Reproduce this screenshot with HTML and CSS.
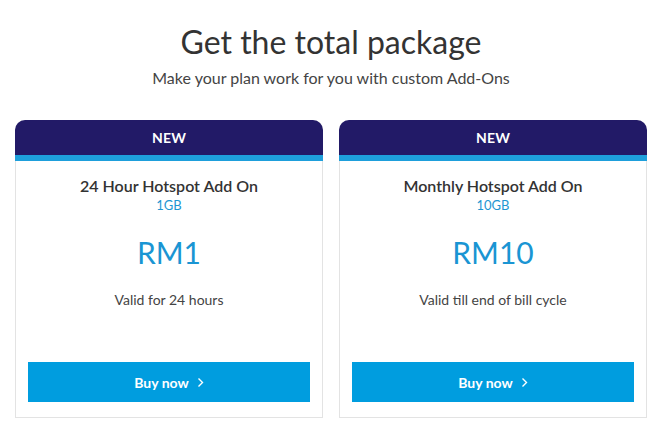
FILE: index.html
```html
<!DOCTYPE html>
<html>
<head>
<meta charset="utf-8">
<link rel="stylesheet" href="styles.css">
</head>
<body>
<section class="addons">
  <h1 class="title">Get the total package</h1>
  <p class="subtitle">Make your plan work for you with custom Add-Ons</p>
  <div class="cards">
    <div class="card">
      <div class="card-head">NEW</div>
      <div class="card-body">
        <div class="name">24 Hour Hotspot Add On</div>
        <div class="quota">1GB</div>
        <div class="price">RM1</div>
        <div class="validity">Valid for 24 hours</div>
      </div>
      <a class="buy" href="#">Buy now <svg class="chev" width="7" height="11" viewBox="0 0 7 11"><path d="M1.5 1.5 L5.5 5.5 L1.5 9.5" fill="none" stroke="#fff" stroke-width="1.4"/></svg></a>
    </div>
    <div class="card">
      <div class="card-head">NEW</div>
      <div class="card-body">
        <div class="name">Monthly Hotspot Add On</div>
        <div class="quota">10GB</div>
        <div class="price">RM10</div>
        <div class="validity">Valid till end of bill cycle</div>
      </div>
      <a class="buy" href="#">Buy now <svg class="chev" width="7" height="11" viewBox="0 0 7 11"><path d="M1.5 1.5 L5.5 5.5 L1.5 9.5" fill="none" stroke="#fff" stroke-width="1.4"/></svg></a>
    </div>
  </div>
</section>
</body>
</html>
```
FILE: styles.css
```css
* { box-sizing: border-box; }
html, body { margin: 0; padding: 0; background: #fff; }
body { font-family: Lato, "Open Sans", sans-serif; color: #333; }
.addons { padding: 22px 14px 0 15px; text-align: center; }
.title { margin: 0; font-size: 32px; font-weight: 400; line-height: 40px; color: #333; }
.subtitle { margin: 6px 0 0; font-size: 16px; line-height: 20px; color: #444; }
.cards { display: flex; gap: 16px; margin-top: 32px; }
.card { width: 308px; height: 298px; border: 1px solid #e3e3e3; border-top: none; border-radius: 10px 10px 0 0; display: flex; flex-direction: column; background: #fff; }
.card-head { height: 41px; background: #221a67; border-bottom: 6px solid #1e9fdb; border-radius: 10px 10px 0 0; margin: 0 -1px; color: #fff; font-weight: 700; font-size: 14px; line-height: 35px; letter-spacing: 0.2px; }
.card-body { padding-top: 15px; }
.name { font-size: 16px; font-weight: 600; line-height: 20px; color: #333; }
.quota { font-size: 13px; line-height: 16px; color: #1e96d2; margin-top: 1px; }
.price { font-size: 30px; line-height: 36px; color: #1a95d3; margin-top: 21px; }
.validity { font-size: 14px; line-height: 20px; color: #444; margin-top: 20px; }
.buy { margin: auto 12px 15px; height: 40px; background: #009ddf; color: #fff; text-decoration: none; font-weight: 700; font-size: 14px; display: flex; align-items: center; justify-content: center; gap: 8px; }
.chev { display: block; }
```
